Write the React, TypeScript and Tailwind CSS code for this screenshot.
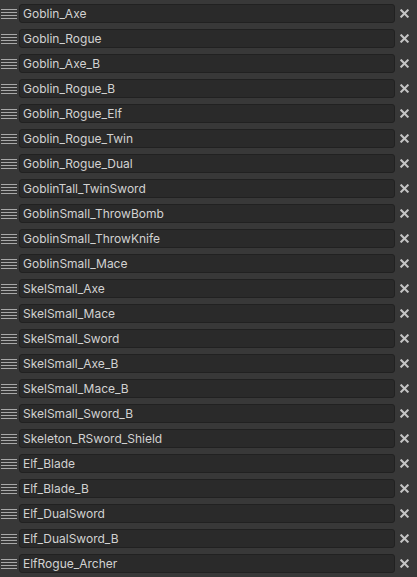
import React from 'react'

const names = [
  'Goblin_Axe',
  'Goblin_Rogue',
  'Goblin_Axe_B',
  'Goblin_Rogue_B',
  'Goblin_Rogue_Elf',
  'Goblin_Rogue_Twin',
  'Goblin_Rogue_Dual',
  'GoblinTall_TwinSword',
  'GoblinSmall_ThrowBomb',
  'GoblinSmall_ThrowKnife',
  'GoblinSmall_Mace',
  'SkelSmall_Axe',
  'SkelSmall_Mace',
  'SkelSmall_Sword',
  'SkelSmall_Axe_B',
  'SkelSmall_Mace_B',
  'SkelSmall_Sword_B',
  'Skeleton_RSword_Shield',
  'Elf_Blade',
  'Elf_Blade_B',
  'Elf_DualSword',
  'Elf_DualSword_B',
  'ElfRogue_Archer',
]

const Handle = () => (
  <div className="w-[16px] ml-[1px] flex flex-col gap-[2px]">
    {[0, 1, 2, 3].map((i) => (
      <div key={i} className="h-[1px] bg-[#a8a8a8]" />
    ))}
  </div>
)

const Remove = () => (
  <svg width="9" height="9" viewBox="0 0 9 9" className="text-[#c4c4c4]">
    <path d="M1.3 1.3 L7.7 7.7 M7.7 1.3 L1.3 7.7" stroke="currentColor" strokeWidth={2} strokeLinecap="square" />
  </svg>
)

export default function App() {
  return (
    <div
      className="w-[417px] h-[577px] bg-[#383838] overflow-hidden"
      style={{ fontFamily: 'Inter, "Noto Sans", sans-serif' }}
    >
      {names.map((n) => (
        <div key={n} className="h-[25px] flex items-center pt-[2px]">
          <Handle />
          <div className="ml-[2px] w-[376px] h-[19px] rounded-[3px] bg-[#2a2a2a] border border-[#212121] flex items-center pl-[3px] text-[12px] text-[#d2d2d2]">
            {n}
          </div>
          <div className="w-[18px] flex justify-center">
            <Remove />
          </div>
        </div>
      ))}
    </div>
  )
}
